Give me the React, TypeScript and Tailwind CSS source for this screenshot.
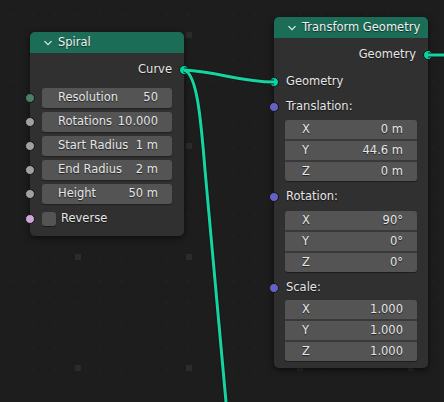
import React from "react";

const font = "font-['DejaVu_Sans','Liberation_Sans',sans-serif]";
const shadow = "[text-shadow:0_1px_1px_rgba(0,0,0,0.6)]";

function Socket({ color, side }: { color: string; side: "l" | "r" }) {
  return (
    <span
      className={`absolute top-1/2 -translate-y-1/2 w-[10px] h-[10px] rounded-full border border-[#141414] ${
        side === "l" ? "left-[-5px]" : "right-[-5px]"
      }`}
      style={{ backgroundColor: color }}
    />
  );
}

function Chevron() {
  return (
    <svg width="10" height="10" viewBox="0 0 10 10" className="shrink-0">
      <path d="M1.5 3.2 L5 6.7 L8.5 3.2" fill="none" stroke="#e8e8e8" strokeWidth="1.2" />
    </svg>
  );
}

function Header({ title }: { title: string }) {
  return (
    <div className={`h-[21px] bg-[#1b6d58] rounded-t-[5px] flex items-center gap-[5px] pl-[13px] text-[#f0f0f0] ${shadow}`}>
      <Chevron />
      <span>{title}</span>
    </div>
  );
}

function Field({ label, value, socket }: { label: string; value: string; socket: string }) {
  return (
    <div className="relative h-[20px] pl-[12px] pr-[12px]">
      <Socket color={socket} side="l" />
      <div className={`h-full bg-[#545454] rounded-[3px] flex items-center justify-between pl-[16px] pr-[14px] text-[#e6e6e6] shadow-[0_1px_1px_rgba(0,0,0,0.35)] ${shadow}`}>
        <span>{label}</span>
        <span>{value}</span>
      </div>
    </div>
  );
}

function VecGroup({ values }: { values: [string, string][] }) {
  return (
    <div className="px-[11px]">
      <div className="bg-[#393939] rounded-[3px] flex flex-col gap-[2px] shadow-[0_1px_1px_rgba(0,0,0,0.4)]">
        {values.map(([l, v], i) => (
          <div
            key={l}
            className={`h-[19px] bg-[#545454] flex items-center justify-between pl-[17px] pr-[14px] text-[#e6e6e6] ${shadow} ${
              i === 0 ? "rounded-t-[3px]" : ""
            } ${i === values.length - 1 ? "rounded-b-[3px]" : ""}`}
          >
            <span>{l}</span>
            <span>{v}</span>
          </div>
        ))}
      </div>
    </div>
  );
}

function Label({ text, color, className = "" }: { text: string; color: string; className?: string }) {
  return (
    <div className={`relative h-[20px] flex items-center pl-[12px] text-[#e6e6e6] ${shadow} ${className}`}>
      <Socket color={color} side="l" />
      <span>{text}</span>
    </div>
  );
}

function Grid() {
  return (
    <svg className="absolute inset-0" width="444" height="402">
      <defs>
        <pattern id="small" x="0" y="13.6" width="22.2" height="22.2" patternUnits="userSpaceOnUse">
          <rect x="10" y="0" width="2" height="2" fill="#222222" />
        </pattern>
        <pattern id="big" x="75" y="32" width="111" height="111" patternUnits="userSpaceOnUse">
          <rect x="0" y="0" width="6" height="6" fill="#2b2b2b" />
        </pattern>
      </defs>
      <rect width="444" height="402" fill="url(#small)" />
      <rect width="444" height="402" fill="url(#big)" />
    </svg>
  );
}

function Wires() {
  const paths = [
    "M184 70 C 197 73, 201 120, 205 170 L 226 402",
    "M184 70 C 220 72, 240 82, 274 82",
    "M428 55 L 444 55",
  ];
  return (
    <svg className="absolute inset-0 pointer-events-none" width="444" height="402">
      {paths.map((d) => (
        <path key={d + "o"} d={d} fill="none" stroke="#0f1a16" strokeWidth="5" />
      ))}
      {paths.map((d) => (
        <path key={d} d={d} fill="none" stroke="#18d2a0" strokeWidth="3" />
      ))}
    </svg>
  );
}

export default function App() {
  return (
    <div className={`relative w-[444px] h-[402px] overflow-hidden bg-[#1d1d1d] text-[11.5px] leading-none ${font}`}>
      <Grid />

      {/* Spiral node */}
      <div className="absolute left-[30px] top-[32px] w-[154px] rounded-[5px] shadow-[0_2px_6px_rgba(0,0,0,0.6)]">
        <Header title="Spiral" />
        <div className="bg-[#303030] rounded-b-[5px] flex flex-col pt-[7px] pb-[8px]">
          <div className={`relative h-[20px] flex items-center justify-end pr-[12px] text-[#e6e6e6] ${shadow}`}>
            <span>Curve</span>
            <Socket color="#00d6a3" side="r" />
          </div>
          <div className="mt-[8px] flex flex-col gap-[4px]">
            <Field label="Resolution" value="50" socket="#4a8066" />
            <Field label="Rotations" value="10.000" socket="#a1a1a1" />
            <Field label="Start Radius" value="1 m" socket="#a1a1a1" />
            <Field label="End Radius" value="2 m" socket="#a1a1a1" />
            <Field label="Height" value="50 m" socket="#a1a1a1" />
          </div>
          <div className={`relative mt-[6px] h-[18px] flex items-center pl-[12px] gap-[5px] text-[#e6e6e6] ${shadow}`}>
            <Socket color="#cca6d6" side="l" />
            <span className="w-[14px] h-[14px] rounded-[3px] bg-[#545454] shadow-[0_1px_1px_rgba(0,0,0,0.4)]" />
            <span>Reverse</span>
          </div>
        </div>
      </div>

      {/* Transform Geometry node */}
      <div className="absolute left-[274px] top-[17px] w-[154px] rounded-[5px] shadow-[0_2px_6px_rgba(0,0,0,0.6)]">
        <Header title="Transform Geometry" />
        <div className="bg-[#303030] rounded-b-[5px] flex flex-col pt-[7px] pb-[7px]">
          <div className={`relative h-[20px] flex items-center justify-end pr-[12px] text-[#e6e6e6] ${shadow}`}>
            <span>Geometry</span>
            <Socket color="#00d6a3" side="r" />
          </div>
          <Label text="Geometry" color="#00d6a3" className="mt-[7px]" />
          <Label text="Translation:" color="#6363c7" className="mt-[5px]" />
          <div className="mt-[3px]">
            <VecGroup values={[["X", "0 m"], ["Y", "44.6 m"], ["Z", "0 m"]]} />
          </div>
          <Label text="Rotation:" color="#6363c7" className="mt-[6px]" />
          <div className="mt-[4px]">
            <VecGroup values={[["X", "90°"], ["Y", "0°"], ["Z", "0°"]]} />
          </div>
          <Label text="Scale:" color="#6363c7" className="mt-[6px]" />
          <div className="mt-[2px]">
            <VecGroup values={[["X", "1.000"], ["Y", "1.000"], ["Z", "1.000"]]} />
          </div>
        </div>
      </div>

      <Wires />
    </div>
  );
}
